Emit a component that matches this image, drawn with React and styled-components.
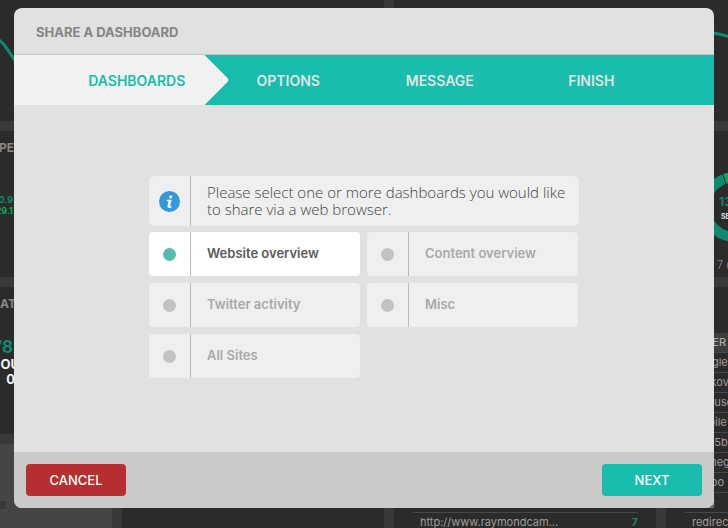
import React, { useState } from "react";
import styled, { createGlobalStyle } from "styled-components";

const teal = "#18bdad";
const darkTeal = "#0f8a70";

const GlobalStyle = createGlobalStyle`
  *, *::before, *::after { box-sizing: border-box; }
  html, body { margin: 0; height: 100%; overflow: hidden; }
  body { background: #38393a; font-family: Inter, "Liberation Sans", sans-serif; }
  button { font: inherit; border: 0; cursor: pointer; }
`;

const Page = styled.div`
  position: relative;
  height: 100vh;
  overflow: hidden;
`;

const Backdrop = styled.div`
  position: absolute;
  inset: 0;
  display: grid;
  grid-template-columns: 112px 262px 262px 1fr;
  grid-template-rows: 121px 146px 147px 1fr;
  gap: 10px;
  background: #38393b;
`;

const Tile = styled.section`
  grid-column: ${(p) => p.$column || "auto"};
  grid-row: ${(p) => p.$row || "auto"};
  min-width: 0;
  min-height: 0;
  overflow: hidden;
  background: ${(p) => (p.$light ? "#454545" : "#2b2b2b")};
  padding-top: ${(p) => p.$top || 0}px;
`;

const TileDrawing = styled.svg`
  display: block;
`;

const Stat = styled.div`
  display: flex;
  justify-content: flex-end;
  width: ${(p) => p.$width || 14}px;
  margin-top: ${(p) => p.$top || 0}px;
  white-space: nowrap;
  font-size: ${(p) => p.$size || 12}px;
  line-height: ${(p) => p.$line || 14}px;
  font-weight: ${(p) => p.$weight || 700};
  color: ${(p) => p.$color || "#8a8682"};
`;

const Notch = styled.div`
  width: 6px;
  height: 8px;
  background: #38393b;
`;

const DataTable = styled.table`
  margin-left: 19px;
  width: ${(p) => p.$width || "100%"};
  table-layout: fixed;
  border-collapse: separate;
  border-spacing: 0;
  font-size: 11px;
  line-height: 19px;
  color: #a09c98;

  th {
    padding: 0 0 0 7px;
    background: #3d3d3d;
    text-align: left;
    font-weight: 500;
    color: #aaa8a6;
  }

  td {
    padding: 0 0 0 7px;
    border-top: 1px solid #484848;
    white-space: nowrap;
  }
`;

const CountCell = styled.td`
  width: 74px;
  text-align: right;
  font-weight: 700;
  color: ${darkTeal};
`;

const Overlay = styled.div`
  position: relative;
  height: 100%;
  padding: 8px 14px 20px;
`;

const Dialog = styled.form`
  display: flex;
  flex-direction: column;
  height: 100%;
  overflow: hidden;
  border-radius: 8px;
  background: #e1e1e1;
`;

const DialogHeader = styled.header`
  display: flex;
  align-items: center;
  padding: 15px 22px 13px;
  border-bottom: 1px solid #c9c6c9;
`;

const Title = styled.h1`
  margin: 0;
  font-size: 13px;
  line-height: 18px;
  font-weight: 700;
  color: #858585;
`;

const Steps = styled.nav`
  display: grid;
  grid-template-columns: repeat(4, 1fr);
  padding: 0 47px;
  background: ${teal};
`;

const Step = styled.button`
  position: relative;
  z-index: 0;
  height: 50px;
  padding: 0;
  background: none;
  font-size: 14px;
  font-weight: 600;
  color: ${(p) => (p.$active ? teal : "#dfe5e1")};

  &::before {
    content: "";
    display: ${(p) => (p.$active ? "block" : "none")};
    position: absolute;
    z-index: -1;
    inset: 0 -16px 0 -47px;
    background: #f2f2f2;
    clip-path: polygon(0 0, calc(100% - 24px) 0, calc(100% - 1px) 46%, 100% 50%, calc(100% - 1px) 54%, calc(100% - 24px) 100%, 0 100%);
  }
`;

const DialogBody = styled.main`
  flex: 1;
  display: flex;
  flex-direction: column;
  align-items: center;
  padding-top: 71px;
`;

const Picker = styled.div`
  display: flex;
  flex-direction: column;
  gap: 6px;
  width: 430px;
`;

const Notice = styled.div`
  display: flex;
  border-radius: 6px;
  background: #efefef;
`;

const LeadCell = styled.span`
  flex: none;
  display: flex;
  align-items: center;
  justify-content: center;
  width: 42px;
  border-right: 1px solid #b9b9b9;
`;

const NoticeText = styled.p`
  margin: 0;
  padding: 8px 0 8px 16px;
  font-family: "Open Sans", "Liberation Sans", sans-serif;
  font-size: 15px;
  line-height: 17px;
  font-weight: 300;
  color: #444;
`;

const Options = styled.fieldset`
  display: grid;
  grid-template-columns: 211px 211px;
  gap: 7px;
  margin: 0;
  padding: 0;
  border: 0;
`;

const Option = styled.label`
  display: flex;
  height: 44px;
  border-radius: 4px;
  background: ${(p) => (p.$selected ? "#fff" : "#efefef")};
  color: ${(p) => (p.$selected ? "#5b5b5b" : "#a9a9a9")};
  cursor: pointer;
`;

const Dot = styled.input`
  appearance: none;
  width: 13px;
  height: 13px;
  margin: 0;
  border-radius: 50%;
  background: #c2c2c2;

  &:checked { background: #57bcab; }
`;

const OptionText = styled.span`
  padding-left: 16px;
  font-size: 13px;
  line-height: 43px;
  font-weight: 600;
`;

const DialogFooter = styled.footer`
  display: flex;
  justify-content: space-between;
  padding: 12px;
  background: #cacaca;
`;

const ActionButton = styled.button`
  width: 100px;
  height: 32px;
  padding: 0;
  border-radius: 4px;
  background: ${(p) => (p.$danger ? "#b52f30" : teal)};
  font-size: 13px;
  font-weight: 500;
  color: #fff;
`;

const steps = ["DASHBOARDS", "OPTIONS", "MESSAGE", "FINISH"];
const dashboards = ["Website overview", "Content overview", "Twitter activity", "Misc", "All Sites"];
const referrers = ["google", "malkov", "inhouse", "mobile", "abdl5b", "winneg", "yahoo", "bing", "redirect"];

function InfoIcon() {
  return (
    <svg width="21" height="21" viewBox="0 0 21 21" aria-hidden="true">
      <circle cx="10.500" cy="10.500" r="10.500" fill="#3498db" />
      <circle cx="11.700" cy="5.800" r="1.600" fill="#fff" />
      <path d="M8 8.700h4.600l-1.400 5.900c-.1.600.4.700 1.500.4l-.3 1.400c-1.900.9-4.300.6-3.900-1.400l1-4.800H7.800z" fill="#fff" />
    </svg>
  );
}

function DashboardBackdrop() {
  return (
    <Backdrop aria-hidden="true">
      <Tile $column="1 / 3" $row="1">
        <TileDrawing width="60" height="121">
          <path d="M-8 36C-2 38 2 42 5 46S12 56 20 68" fill="none" stroke={darkTeal} strokeWidth="3" />
        </TileDrawing>
      </Tile>
      <Tile $column="3 / 5" $row="1">
        <TileDrawing width="100%" height="121">
          <path d="M300 30L320 33L350 40" fill="none" stroke={darkTeal} strokeWidth="3" />
        </TileDrawing>
      </Tile>
      <Tile $column="1" $row="2" $top={10}>
        <Stat>PE</Stat>
        <Stat $width={13} $top={39} $size={9} $line={11} $color={darkTeal}>0.9</Stat>
        <Stat $width={13} $size={9} $line={11} $color="#0ea65c">29.1</Stat>
      </Tile>
      <Tile $column="1" $row="3" $top={10}>
        <Stat $width={16}>AT</Stat>
        <Stat $width={13} $top={27} $size={17} $line={18} $color={darkTeal}>78</Stat>
        <Stat $width={20} $size={13} $line={16} $color="#f2f2f2">OU</Stat>
        <Stat $width={15} $size={13} $line={15} $color="#f2f2f2">0</Stat>
      </Tile>
      <Tile $column="1" $row="4" $light $top={57}>
        <Notch />
      </Tile>
      <Tile $column="2" $row="2 / 5" />
      <Tile $column="3" $row="2 / 5" $top={381}>
        <DataTable $width="225px">
          <tbody>
            <tr>
              <td>http://www.raymondcam...</td>
              <CountCell>7</CountCell>
            </tr>
          </tbody>
        </DataTable>
      </Tile>
      <Tile $column="4" $row="2">
        <TileDrawing width="140" height="146">
          <circle cx="69" cy="76" r="30" fill="none" stroke={darkTeal} strokeWidth="10" />
          <path d="M59 48A30 30 0 0 1 72 46" fill="none" stroke="#0ea65c" strokeWidth="10" />
          <path d="M56 41L60 53" stroke="#2b2b2b" strokeWidth="1" />
          <text x="53" y="75" fontSize="12" fontWeight="700" fill={darkTeal}>13</text>
          <text x="55" y="88" fontSize="7" fontWeight="700" fill="#ddd">SE</text>
          <text x="51" y="138" fontSize="11" fontWeight="300" fill="#92908e">7 d</text>
        </TileDrawing>
      </Tile>
      <Tile $column="4" $row="3 / 5" $top={46}>
        <DataTable>
          <thead>
            <tr><th>REFER</th></tr>
          </thead>
          <tbody>
            {referrers.map((name) => (
              <tr key={name}><td>{name}</td></tr>
            ))}
          </tbody>
        </DataTable>
      </Tile>
    </Backdrop>
  );
}

export default function App() {
  const [selected, setSelected] = useState(["Website overview"]);
  const toggle = (name) =>
    setSelected((list) => (list.includes(name) ? list.filter((n) => n !== name) : [...list, name]));

  return (
    <Page>
      <GlobalStyle />
      <DashboardBackdrop />
      <Overlay>
        <Dialog role="dialog" aria-labelledby="dialog-title" onSubmit={(e) => e.preventDefault()}>
          <DialogHeader>
            <Title id="dialog-title">SHARE A DASHBOARD</Title>
          </DialogHeader>
          <Steps aria-label="Steps">
            {steps.map((name, i) => (
              <Step key={name} type="button" $active={i === 0} aria-current={i === 0 ? "step" : undefined}>
                {name}
              </Step>
            ))}
          </Steps>
          <DialogBody>
            <Picker>
              <Notice>
                <LeadCell><InfoIcon /></LeadCell>
                <NoticeText>
                  Please select one or more dashboards you would like
                  <br />
                  to share via a web browser.
                </NoticeText>
              </Notice>
              <Options aria-label="Dashboards">
                {dashboards.map((name) => (
                  <Option key={name} $selected={selected.includes(name)}>
                    <LeadCell>
                      <Dot type="checkbox" checked={selected.includes(name)} onChange={() => toggle(name)} />
                    </LeadCell>
                    <OptionText>{name}</OptionText>
                  </Option>
                ))}
              </Options>
            </Picker>
          </DialogBody>
          <DialogFooter>
            <ActionButton type="button" $danger>CANCEL</ActionButton>
            <ActionButton type="submit">NEXT</ActionButton>
          </DialogFooter>
        </Dialog>
      </Overlay>
    </Page>
  );
}
